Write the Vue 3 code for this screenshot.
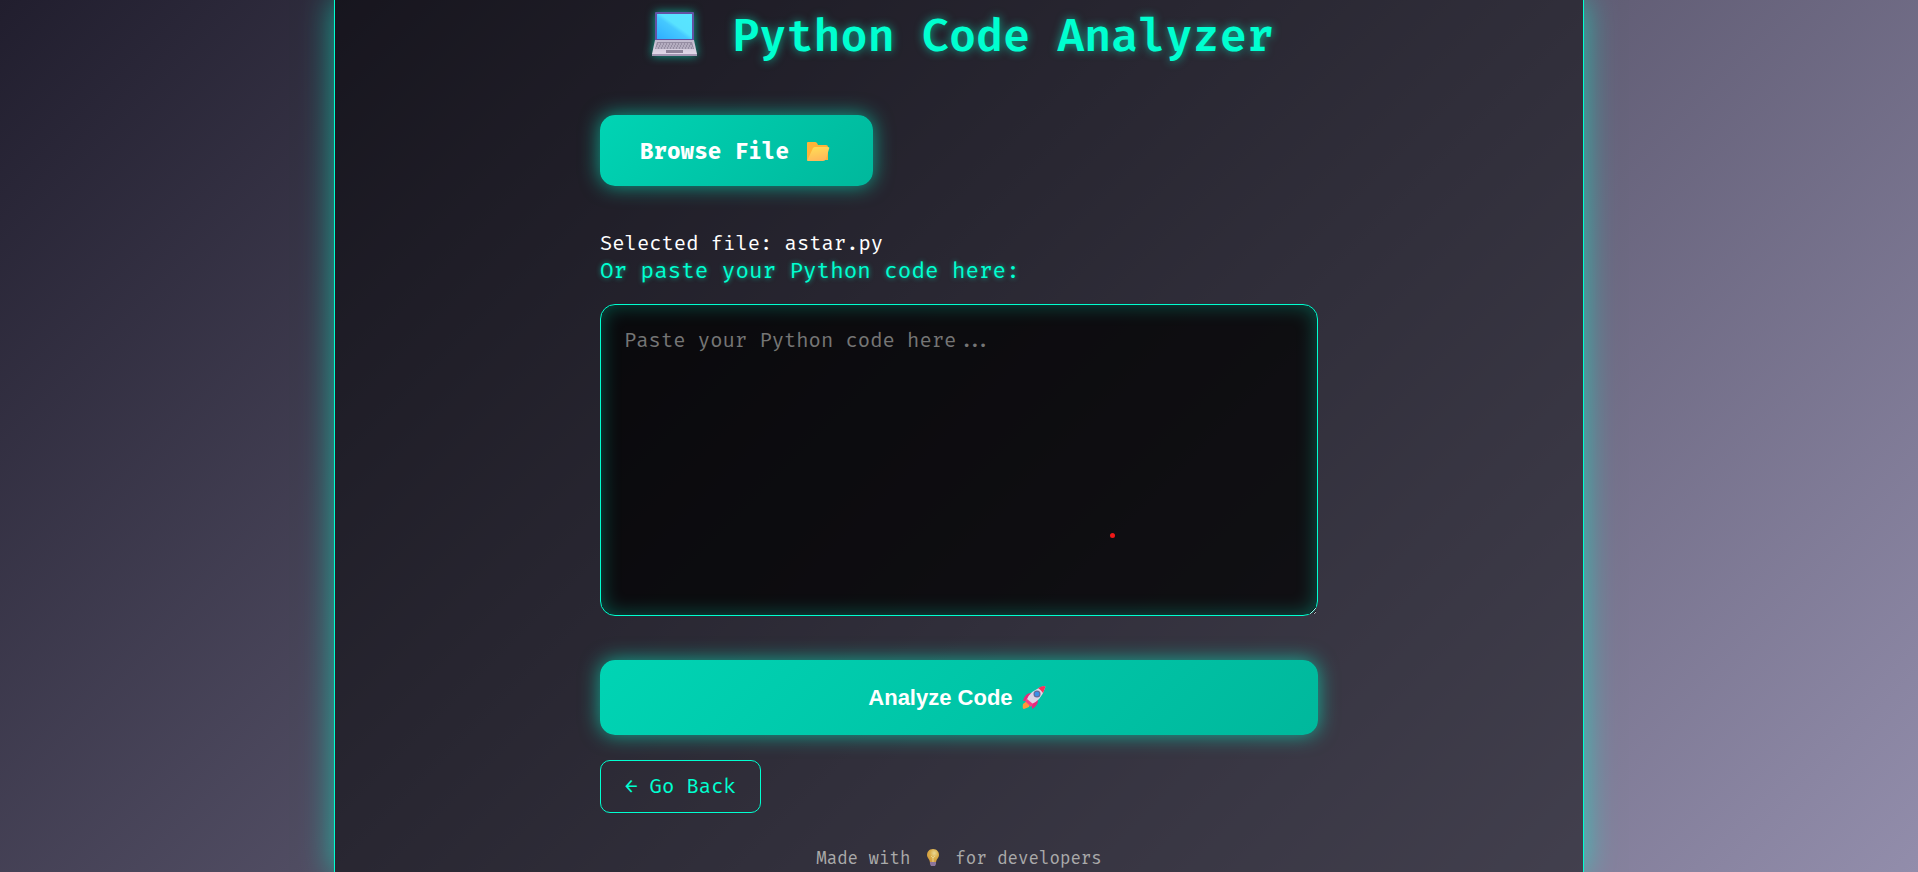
<script setup>
import { ref } from 'vue'

const fileInput = ref(null)
const fileName = ref('astar.py')
const code = ref('')

function browse() {
  fileInput.value.click()
}

function onFileChange(event) {
  const file = event.target.files[0]
  if (file) fileName.value = file.name
}
</script>

<template>
  <div class="page">
    <main class="panel">
      <form class="column" @submit.prevent>
        <h1 class="title">
          <svg class="laptop" viewBox="0 0 61 48" aria-hidden="true">
            <defs>
              <linearGradient id="screen" x1="0" y1="1" x2="1" y2="0">
                <stop offset="0" stop-color="#2eaeff" />
                <stop offset="0.45" stop-color="#45c8ff" />
                <stop offset="0.55" stop-color="#58e2ff" />
                <stop offset="1" stop-color="#58e6ff" />
              </linearGradient>
              <linearGradient id="deck" x1="0" y1="0" x2="0" y2="1">
                <stop offset="0" stop-color="#bfb8cc" />
                <stop offset="1" stop-color="#e0d8e8" />
              </linearGradient>
            </defs>
            <rect x="11" y="1" width="39" height="29" rx="1" fill="#6352a3" />
            <rect x="13" y="3" width="35" height="25" fill="url(#screen)" />
            <path d="M11 29h39l3 14H8z" fill="url(#deck)" />
            <path d="M8 43h45v2H8z" fill="#a497b3" />
            <path d="M13 31h35l2 7H11z" fill="#958da3" />
            <path d="M14 33h33M13 35h35M12 37h37" stroke="#d2cbdc" stroke-width="1" stroke-dasharray="2 1" />
            <path d="M22 39h17v3H22z" fill="#8c8399" />
          </svg>
          Python Code Analyzer
        </h1>

        <button type="button" class="browse" @click="browse">
          Browse File
          <svg class="folder" viewBox="0 0 31 24" aria-hidden="true">
            <defs>
              <linearGradient id="flap" x1="0.3" y1="0" x2="0.6" y2="1">
                <stop offset="0" stop-color="#ffdc55" />
                <stop offset="1" stop-color="#ffb65b" />
              </linearGradient>
            </defs>
            <path d="M5 3q0-1 1-1h7q1 0 2 1l1 2h8q2 0 2 2v13H5z" fill="#ffb338" />
            <path d="M11 8q1-1 2-1h13q2 0 1 2l-3 10q-1 2-3 2H5z" fill="url(#flap)" />
          </svg>
        </button>
        <input ref="fileInput" type="file" accept=".py" aria-label="Python file" hidden @change="onFileChange" />

        <p class="selected">Selected file: {{ fileName }}</p>
        <label class="prompt" for="code">Or paste your Python code here:</label>

        <div class="editor">
          <textarea id="code" v-model="code" spellcheck="false" placeholder="Paste your Python code here..."></textarea>
          <span class="pointer"></span>
        </div>

        <button type="submit" class="analyze">
          Analyze Code
          <svg class="rocket" viewBox="0 0 31 26" aria-hidden="true">
            <path d="M4 20l4-3 3 3-1 3-5 2q-2 0-1-5z" fill="#ff9838" />
            <path d="M12 9q-6 0-8 8l6-1z" fill="#e9297c" />
            <path d="M19 16q0 6-6 9v-7z" fill="#e9297c" />
            <path d="M7 17Q11 6 25 2q2 0 1 2-4 13-15 17z" fill="#ded5e6" />
            <path d="M19 4q4-2 6-2 2 0 1 2l-2 5q-2-3-5-5z" fill="#f8315b" />
            <path d="M6 17l2-2 6 5-2 3z" fill="#f83c87" />
            <circle cx="18" cy="10" r="3.5" fill="#646a9c" />
            <circle cx="18" cy="10" r="2.3" fill="#3c91e8" />
          </svg>
        </button>

        <button type="button" class="back">← Go Back</button>

        <footer class="footer">
          Made with
          <svg class="bulb" viewBox="0 0 24 20" aria-hidden="true">
            <defs>
              <radialGradient id="glass" cx="0.6" cy="0.3" r="0.7">
                <stop offset="0" stop-color="#ead995" />
                <stop offset="0.5" stop-color="#dbad48" />
                <stop offset="1" stop-color="#ce973d" />
              </radialGradient>
            </defs>
            <path d="M12 1c-4 0-6 3-6 6s3 4 3 8h6c0-4 3-5 3-8s-2-6-6-6z" fill="url(#glass)" />
            <path d="M10 8l2 2 2-2M12 10v5" fill="none" stroke="#ead38a" stroke-width="1" />
            <path d="M9 14h6v2l-1 2h-4l-1-2z" fill="#8b759b" />
          </svg>
          for developers
        </footer>
      </form>
    </main>
  </div>
</template>

<style>
body {
  margin: 0;
  background: #1f1c2c;
}
</style>

<style scoped>
.page {
  --neon: #00ffd0;
  --mono: "Fira Code", "DejaVu Sans Mono", "Liberation Mono", monospace;
  box-sizing: border-box;
  min-height: 100vh;
  display: flex;
  justify-content: center;
  overflow: hidden;
  background: linear-gradient(135deg, #211e2e, #928dab);
  color: #fff;
  font-family: var(--mono);
  font-size: 20px;
}

.panel {
  box-sizing: border-box;
  width: 100%;
  max-width: 1250px;
  padding: 8px 24px 0;
  display: flex;
  justify-content: center;
  border: solid var(--neon);
  border-width: 0 1px;
  background: rgba(0, 0, 0, 0.5);
  box-shadow: 0 0 30px rgba(0, 255, 208, 0.6);
}

.column {
  width: 100%;
  max-width: 718px;
  display: flex;
  flex-direction: column;
  align-items: flex-start;
}

button {
  border: 0;
  cursor: pointer;
}

.title {
  align-self: center;
  margin: 0 0 47px;
  color: var(--neon);
  font-size: 44px;
  font-weight: 600;
  line-height: 60px;
  white-space: nowrap;
  text-shadow: 0 0 10px rgba(0, 255, 208, 0.6);
}

.laptop {
  width: 61px;
  height: 48px;
  vertical-align: -8px;
  filter: drop-shadow(0 0 5px rgba(0, 255, 208, 0.6));
}

.browse,
.analyze {
  border-radius: 15px;
  background: linear-gradient(135deg, #00d4b4, #00b89c);
  box-shadow: 0 0 20px rgba(0, 255, 208, 0.6);
  color: #fff;
  font-weight: bold;
  font-size: 22px;
}

.browse {
  height: 71px;
  padding: 4px 40px 0;
  font-family: var(--mono);
}

.folder {
  width: 31px;
  height: 24px;
  vertical-align: -5px;
}

.selected {
  margin: 44px 0 0;
  line-height: 28px;
}

.prompt {
  margin-bottom: 19px;
  color: var(--neon);
  font-size: 22px;
  line-height: 27px;
  text-shadow: 0 0 5px rgba(0, 255, 208, 0.6);
}

.editor {
  position: relative;
  width: 100%;
  margin-bottom: 44px;
}

.editor textarea {
  box-sizing: border-box;
  display: block;
  width: 100%;
  height: 312px;
  padding: 23px;
  border: 1px solid var(--neon);
  border-radius: 15px;
  outline: 0;
  background: rgba(0, 0, 0, 0.7);
  box-shadow: inset 0 0 20px rgba(0, 255, 208, 0.3);
  color: #fff;
  font-family: var(--mono);
  font-size: 20px;
  line-height: 26px;
  resize: vertical;
}

.editor textarea::placeholder {
  color: #757575;
}

.pointer {
  position: absolute;
  left: 510px;
  top: 229px;
  width: 5px;
  height: 5px;
  border-radius: 50%;
  background: #f01818;
}

.analyze {
  width: 100%;
  height: 75px;
  margin-bottom: 25px;
  font-family: "Liberation Sans", Arial, sans-serif;
}

.rocket {
  width: 31px;
  height: 26px;
  vertical-align: -5px;
}

.back {
  height: 53px;
  margin-bottom: 32px;
  padding: 0 24px;
  border: 1px solid var(--neon);
  border-radius: 10px;
  background: transparent;
  color: var(--neon);
  font-family: var(--mono);
  font-size: 20px;
}

.footer {
  align-self: center;
  color: #aaa;
  font-size: 17px;
  line-height: 28px;
  white-space: nowrap;
}

.bulb {
  width: 24px;
  height: 20px;
  vertical-align: -4px;
}
</style>
